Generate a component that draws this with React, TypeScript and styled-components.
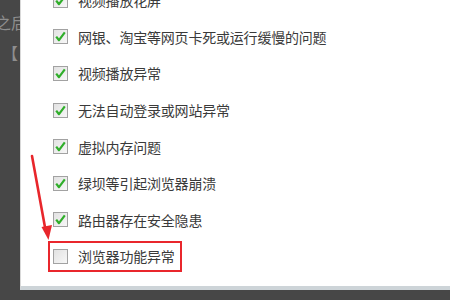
import styled, { createGlobalStyle } from "styled-components";

const GlobalStyle = createGlobalStyle`
  html, body {
    margin: 0;
    padding: 0;
    background: #474747;
    overflow: hidden;
  }
  body {
    font-family: "Noto Sans CJK SC", "Liberation Sans", sans-serif;
  }
`;

const ITEMS = [
  { text: "视频播放花屏", checked: true },
  { text: "网银、淘宝等网页卡死或运行缓慢的问题", checked: true },
  { text: "视频播放异常", checked: true },
  { text: "无法自动登录或网站异常", checked: true },
  { text: "虚拟内存问题", checked: true },
  { text: "绿坝等引起浏览器崩溃", checked: true },
  { text: "路由器存在安全隐患", checked: true },
  { text: "浏览器功能异常", checked: false, highlight: true },
];

const Screen = styled.div`
  position: relative;
  width: 450px;
  height: 300px;
  display: flex;
  background: #474747;
  overflow: hidden;
`;

const Backdrop = styled.div`
  width: 20px;
  flex: none;
  overflow: hidden;
  color: #8e8e8e;
  font-size: 16px;
  line-height: 20px;
  padding-top: 12px;
  display: flex;
  flex-direction: column;
  gap: 10px;
`;

const BackdropLine = styled.div<{ $shift: number }>`
  white-space: nowrap;
  margin-left: ${(p) => p.$shift}px;
`;

const Panel = styled.div`
  flex: 1;
  height: 286px;
  background: #ffffff;
  border-bottom: 4px solid #cdd4d8;
  border-left: 1px solid #d9d9d9;
  overflow: hidden;
`;

const List = styled.ul`
  list-style: none;
  margin: -18px 0 0 0;
  padding: 0 0 0 32px;
`;

const Row = styled.li`
  height: 36.6px;
  display: flex;
  align-items: center;
`;

const Label = styled.label<{ $highlight?: boolean }>`
  display: inline-flex;
  align-items: center;
  gap: 10px;
  font-size: 14px;
  color: #3a3a3a;
  white-space: nowrap;
  letter-spacing: -0.2px;
  ${(p) =>
    p.$highlight
      ? `
    border: 2px solid #e9262c;
    margin-left: -5px;
    padding: 0 5px 0 3px;
    height: 27px;
  `
      : ""}
`;

const Box = styled.span`
  width: 13px;
  height: 13px;
  flex: none;
  border: 1px solid #a2a2a2;
  background: linear-gradient(135deg, #e2e2e2 0%, #f7f7f7 100%);
  display: flex;
  align-items: center;
  justify-content: center;
`;

const Arrow = styled.svg`
  position: absolute;
  left: 0;
  top: 0;
  pointer-events: none;
`;

function Check() {
  return (
    <svg width="13" height="13" viewBox="0 0 13 13">
      <path
        d="M2.2 6.6 L5 10.2 L10.8 2.4"
        fill="none"
        stroke="#2fae2a"
        strokeWidth="2.2"
        strokeLinejoin="round"
      />
    </svg>
  );
}

export default function App() {
  return (
    <>
      <GlobalStyle />
      <Screen>
        <Backdrop>
          <BackdropLine $shift={-5}>之后</BackdropLine>
          <BackdropLine $shift={2}>【 安</BackdropLine>
        </Backdrop>
        <Panel>
          <List>
            {ITEMS.map((item) => (
              <Row key={item.text}>
                <Label $highlight={item.highlight}>
                  <Box>{item.checked && <Check />}</Box>
                  {item.text}
                </Label>
              </Row>
            ))}
          </List>
        </Panel>
        <Arrow width="450" height="300" viewBox="0 0 450 300">
          <line
            x1="32"
            y1="156"
            x2="45.5"
            y2="230"
            stroke="#e8262b"
            strokeWidth="2.6"
            strokeLinecap="round"
          />
          <polygon points="41.5,227 52,225 48.5,240" fill="#e8262b" />
        </Arrow>
      </Screen>
    </>
  );
}
